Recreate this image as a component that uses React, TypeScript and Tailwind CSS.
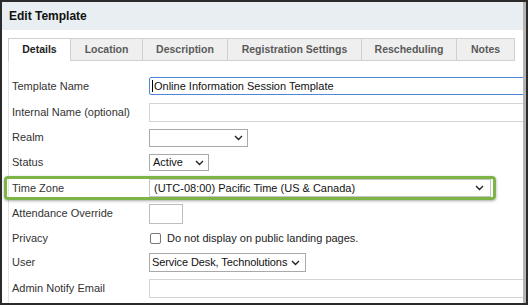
import React from "react";

const Chevron = () => (
  <svg width="9" height="6" viewBox="0 0 9 6" className="shrink-0">
    <path d="M1 1 L4.5 4.5 L8 1" fill="none" stroke="#222" strokeWidth="1.4" />
  </svg>
);

const tabs: { label: string; w: string; active?: boolean }[] = [
  { label: "Details", w: "w-[63px]", active: true },
  { label: "Location", w: "w-[72px]" },
  { label: "Description", w: "w-[85px]" },
  { label: "Registration Settings", w: "w-[134px]" },
  { label: "Rescheduling", w: "w-[95px]" },
  { label: "Notes", w: "w-[58px]" },
];

function Label({ children }: { children: React.ReactNode }) {
  return <div className="w-[137px] shrink-0 text-[11px] text-[#333] whitespace-nowrap">{children}</div>;
}

export default function App() {
  return (
    <div
      className="w-[531px] h-[308px] bg-white"
      style={{ fontFamily: '"Liberation Sans", Arial, sans-serif' }}
    >
      <div className="w-[528px] h-[305px] border-2 border-[#2b2b2b] flex flex-col">
        <div className="flex-1 flex flex-col overflow-hidden border-r-[3px] border-[#b4b4b4]">
          <div className="h-[28px] shrink-0 bg-[#e8eef2] pl-[7px] flex items-center text-[12px] font-bold text-[#111]">
            Edit Template
          </div>
          <div className="mt-[8px] ml-[6px] flex h-[23px] shrink-0">
            {tabs.map((t) => (
              <div
                key={t.label}
                className={
                  t.active
                    ? `${t.w} h-[23px] flex items-center justify-center bg-white border-l border-t border-r border-[#d0d0d0] text-[10.5px] font-bold text-[#222] whitespace-nowrap`
                    : `${t.w} h-[23px] flex items-center justify-center bg-[#efefef] border-t border-r border-b border-[#d0d0d0] text-[10.5px] font-bold text-[#5a5a5a] whitespace-nowrap`
                }
              >
                {t.label}
              </div>
            ))}
          </div>
          <div className="flex-1 ml-[6px] border-l border-[#e4e4e4] pl-[3px] pt-[12px] flex flex-col">
            <div className="h-[26px] flex items-center">
              <Label>Template Name</Label>
              <div className="w-[400px] h-[18px] shrink-0 border border-[#4f86d6] rounded-[2px] flex items-center pl-[2px] text-[11px] text-[#111] whitespace-nowrap">
                <span className="w-px h-[12px] bg-black mr-[1px]" />
                Online Information Session Template
              </div>
            </div>
            <div className="h-[26px] flex items-center">
              <Label>Internal Name (optional)</Label>
              <div className="w-[400px] h-[19px] shrink-0 border border-[#d4d4d4]" />
            </div>
            <div className="h-[25px] flex items-center">
              <Label>Realm</Label>
              <div className="w-[99px] h-[18px] border border-[#a9a9a9] flex items-center justify-end pr-[4px]">
                <Chevron />
              </div>
            </div>
            <div className="h-[25px] flex items-center">
              <Label>Status</Label>
              <div className="w-[60px] h-[17px] border border-[#a9a9a9] flex items-center justify-between pl-[3px] pr-[4px] text-[11px] text-[#111]">
                <span>Active</span>
                <Chevron />
              </div>
            </div>
            <div className="h-[26px] flex items-center relative">
              <div className="absolute left-[-8px] top-[1px] w-[492px] h-[24px] border-[3px] border-[#7db446] rounded-[4px] shadow-[0_1px_3px_rgba(0,0,0,0.35)]" />
              <Label>Time Zone</Label>
              <div className="w-[342px] h-[18px] border border-[#c4c4c4] flex items-center justify-between pl-[4px] pr-[6px] text-[11px] text-[#111] whitespace-nowrap">
                <span>(UTC-08:00) Pacific Time (US &amp; Canada)</span>
                <Chevron />
              </div>
            </div>
            <div className="h-[25px] flex items-center">
              <Label>Attendance Override</Label>
              <div className="w-[34px] h-[20px] border border-[#bdbdbd]" />
            </div>
            <div className="h-[24px] flex items-center">
              <Label>Privacy</Label>
              <div className="w-[11px] h-[11px] ml-[1px] border border-[#777] rounded-[2px] bg-white" />
              <span className="ml-[6px] text-[11px] text-[#222] whitespace-nowrap">Do not display on public landing pages.</span>
            </div>
            <div className="h-[25px] flex items-center">
              <Label>User</Label>
              <div className="w-[157px] h-[19px] border border-[#a9a9a9] flex items-center gap-[4px] pl-[2px] pr-[3px] text-[11px] text-[#111] whitespace-nowrap">
                <span className="tracking-[-0.1px]">Service Desk, Technolutions</span>
                <Chevron />
              </div>
            </div>
            <div className="h-[26px] flex items-center">
              <Label>Admin Notify Email</Label>
              <div className="w-[400px] h-[19px] shrink-0 border border-[#d4d4d4]" />
            </div>
          </div>
        </div>
      </div>
    </div>
  );
}
